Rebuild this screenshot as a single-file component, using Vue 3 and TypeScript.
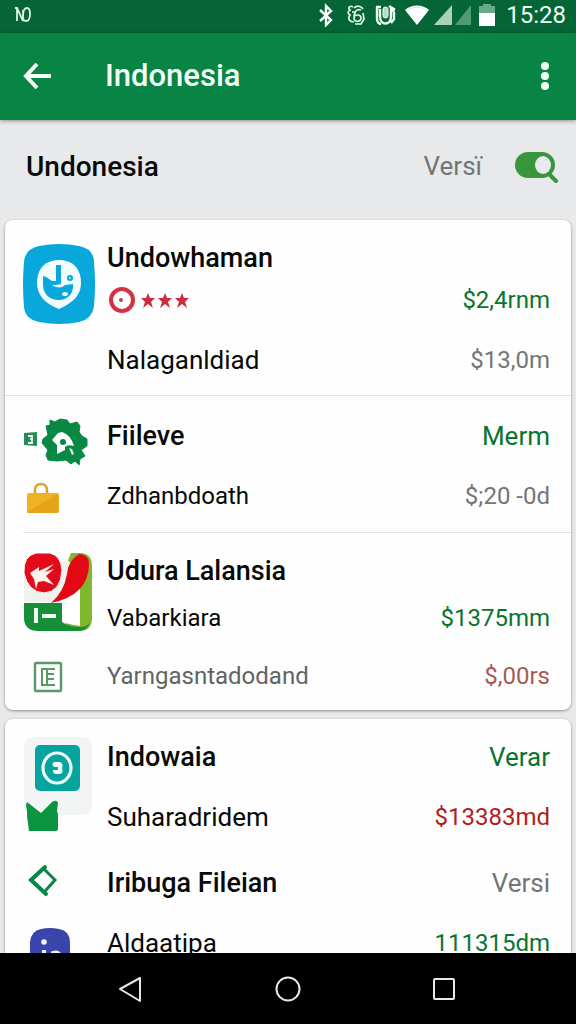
<script setup lang="ts">
import { ref } from 'vue'

type Tone = 'green' | 'gray' | 'red' | 'brick'
type Space = 'none' | 'small' | 'snug' | 'mid' | 'large'
interface Row {
  label: string
  value?: string
  tone?: Tone
  kind: 'title' | 'text' | 'narrow' | 'muted' | 'rating'
  space: Space
}
interface Group {
  id: string
  rows: Row[]
}

const filterOn = ref(true)

const isAmount = (value: string): boolean => /\d/.test(value)

const cards: Group[][] = [
  [
    {
      id: 'face',
      rows: [
        { label: 'Undowhaman', kind: 'title', space: 'none' },
        { label: 'Rating', value: '$2,4rnm', tone: 'green', kind: 'rating', space: 'none' },
        { label: 'Nalaganldiad', value: '$13,0m', tone: 'gray', kind: 'text', space: 'mid' },
      ],
    },
    {
      id: 'gear',
      rows: [
        { label: 'Fiileve', value: 'Merm', tone: 'green', kind: 'title', space: 'none' },
        { label: 'Zdhanbdoath', value: '$;20 -0d', tone: 'gray', kind: 'narrow', space: 'mid' },
      ],
    },
    {
      id: 'bird',
      rows: [
        { label: 'Udura Lalansia', kind: 'title', space: 'none' },
        { label: 'Vabarkiara', value: '$1375mm', tone: 'green', kind: 'narrow', space: 'small' },
        { label: 'Yarngasntadodand', value: '$,00rs', tone: 'brick', kind: 'muted', space: 'snug' },
      ],
    },
  ],
  [
    {
      id: 'teal',
      rows: [
        { label: 'Indowaia', value: 'Verar', tone: 'green', kind: 'title', space: 'none' },
        { label: 'Suharadridem', value: '$13383md', tone: 'red', kind: 'text', space: 'mid' },
        { label: 'Iribuga Fileian', value: 'Versi', tone: 'gray', kind: 'title', space: 'large' },
        { label: 'Aldaatipa', value: '111315dm', tone: 'green', kind: 'text', space: 'mid' },
      ],
    },
  ],
]
</script>

<template>
  <div class="screen">
    <div class="status">
      <svg class="status-logo" width="18" height="18" viewBox="0 0 18 18" fill="none" stroke="#d9f3e4" stroke-width="1.8" aria-hidden="true">
        <path d="M1 2h2v13M3 2l6 13V4M9 11c0-6 1-9 4-9s3 3 3 6-1 7-4 7-3-2-3-4" />
      </svg>
      <div class="status-icons" aria-hidden="true">
        <svg width="16" height="24" viewBox="0 0 16 24" fill="none" stroke="#fff" stroke-width="2.4">
          <path d="M2 7l11 10-5 5V3l5 5L2 18" />
        </svg>
        <svg class="gap-a" width="20" height="22" viewBox="0 0 20 22" fill="none" stroke="#e2f7ea" stroke-width="1.7">
          <path d="M7 3C4 1 1 4 4 6c-3 2-2 4 0 5-3 4 0 7 4 7M8 4c3-3 7-2 9 1M15 6c-5-2-7 3-7 8M8 14c0-4 7-4 7 0s-7 5-7 0M6 8h4M17 9l1 6-3 5H9" />
        </svg>
        <svg class="gap-s" width="22" height="22" viewBox="0 0 22 22" fill="none" stroke="#effff5" stroke-width="2.4">
          <path d="M3 3v12c0 3 2 5 4 5M2 3h5M6 5v7c0 10 11 10 11 0V4M15 2l5 3-1 3M20 8v7l-3 4" />
          <rect x="9" y="3" width="5" height="11" rx="2.5" fill="#b5d9c5" stroke-width="1" />
        </svg>
        <svg class="gap-b" width="26" height="22" viewBox="0 0 26 22">
          <path d="M1 6C7 0 19 0 25 6L13 21z" fill="#fff" />
          <path d="M3 7c6-5 14-5 20 0" fill="none" stroke="#cfe8da" />
        </svg>
        <svg class="gap-c" width="38" height="22" viewBox="0 0 38 22">
          <path d="M0 21L18 1v20z" fill="#a9d2b8" />
          <path d="M21 21L37 1v20z" fill="#4f9b72" />
        </svg>
        <svg class="gap-d" width="18" height="24" viewBox="0 0 18 24">
          <path d="M1 3h4V1h8v2h4v8H1z" fill="#6aab87" />
          <path d="M1 10h16v13H1z" fill="#fff" />
        </svg>
      </div>
      <time class="clock">15:28</time>
    </div>

    <header class="appbar">
      <button type="button" class="icon-btn" aria-label="Back">
        <svg width="30" height="30" viewBox="0 0 30 30" fill="none" stroke="#f4fff8" stroke-width="4">
          <path d="M15 3L4 15l11 12M4 15h25" />
        </svg>
      </button>
      <h1>Indonesia</h1>
      <button type="button" class="icon-btn" aria-label="More options">
        <svg width="10" height="30" viewBox="0 0 10 30" fill="#f4fff8">
          <circle cx="5" cy="5" r="4" /><circle cx="5" cy="15" r="4" /><circle cx="5" cy="25" r="4" />
        </svg>
      </button>
    </header>

    <main>
      <section class="section-head">
        <h2>Undonesia</h2>
        <label class="filter">
          <span>Versï</span>
          <input v-model="filterOn" type="checkbox" />
          <svg width="46" height="34" viewBox="0 0 46 34" aria-hidden="true">
            <rect x="1" y="3" width="40" height="26" rx="13" fill="#3a963d" />
            <path d="M35 25l7 7" stroke="#3a963d" stroke-width="4" stroke-linecap="round" />
            <ellipse cx="29" cy="16" rx="8" ry="9" fill="#e9eaeb" />
          </svg>
        </label>
      </section>

      <section v-for="(card, c) in cards" :key="c" class="card">
        <div v-for="group in card" :key="group.id" class="group" :class="'group-' + group.id">
          <div class="icons" aria-hidden="true">
            <template v-if="group.id === 'face'">
              <svg width="72" height="82" viewBox="0 0 72 82">
                <path d="M16 3Q36-1 56 3Q71 6 71 19Q73 41 71 63Q69 76 56 79Q36 83 16 79Q2 76 1 64Q-1 41 1 19Q2 6 16 3z" fill="#08a8dc" />
                <path d="M36 17C50 17 58 26 58 40C58 53 49 60 36 66C23 61 14 53 14 40C14 26 22 17 36 17z" fill="#f3fcff" />
                <path d="M33 22h5v19l-5 1z" fill="#08a8dc" />
                <path d="M20 33l3 1 6 4h4v4H20z" fill="#08a8dc" />
                <path d="M20 42h9q8 5 13 0l8-1c1 9-5 16-14 16-9 0-16-6-16-15z" fill="#08a8dc" />
                <circle cx="47" cy="35" r="3" fill="#08a8dc" />
                <circle cx="47" cy="35" r="1" fill="#b9e8f5" />
                <ellipse cx="42" cy="51" rx="3" ry="2" fill="#e6faff" />
              </svg>
            </template>
            <template v-else-if="group.id === 'gear'">
              <svg width="66" height="48" viewBox="0 0 66 48">
                <path d="M1 15l13-1v14l-13-1z" fill="#258a57" />
                <path d="M5 18h4v3H7h2v4H5" fill="none" stroke="#e7f7ee" stroke-width="1.8" />
                <path d="M27 2L32 4L37 1L44 2L47 6L54 4L57 8L56 14L59 18L64 21V28L58 32L62 38L57 41L56 47L52 43L48 46L43 42Q34 44 25 42L23 37L25 32L19 25L20 21L25 17L23 8L27 7z" fill="#078943" stroke="#078943" stroke-linejoin="round" />
                <path d="M35 15L39 14Q48 17 51 28Q45 26 42 29L42 32L34 36L34 27L29 22z" fill="#fff" />
                <ellipse cx="40" cy="24" rx="3" ry="3" fill="#078943" />
                <path d="M46 30l3 1 2 5-2 1z" fill="#d6eadc" />
              </svg>
              <svg class="bag" width="34" height="32" viewBox="0 0 34 32">
                <path d="M9 14V8c0-8 12-8 12 0v5" fill="none" stroke="#dca32c" stroke-width="2.5" />
                <rect x="1" y="11" width="32" height="20" rx="2" fill="#eeb225" />
                <path d="M1 30L32 12v17q0 2-2 2H3q-2 0-2-1z" fill="#e5a31c" />
              </svg>
            </template>
            <template v-else-if="group.id === 'bird'">
              <svg width="69" height="78" viewBox="0 0 69 78">
                <path d="M48 0h10q11 1 11 13v52q0 13-13 13H42V15z" fill="#80b82d" />
                <path d="M1 8h45l11 15v50L36 69V49H1z" fill="#f1f1ee" />
                <path d="M39 45l18-12v39q-13 0-18-5z" fill="#fff" />
                <path d="M56 1q10 0 10 10Q66 42 28 50Q41 39 44 21Q45 8 56 1z" fill="#e30914" />
                <path d="M13 0h14q11 3 12 17Q38 39 21 40Q5 39 1 20Q0 3 13 0z" fill="#e20a1b" stroke="#fff" />
                <path d="M7 20l9-6v4l15-7-9 8 9-3-8 7 8 9-10-4-6 1-2 7-2-10z" fill="#fff4ee" />
                <path d="M1 50h38v19q6 5 18 5 8 0 10-5-2 9-13 9H15Q2 78 1 66z" fill="#159039" />
                <path d="M13 55v15M19 63h14" stroke="#f2fff3" stroke-width="4" />
              </svg>
              <svg class="sheet" width="30" height="32" viewBox="0 0 30 32" fill="none" stroke="#579a6a">
                <rect x="2" y="2" width="26" height="28" rx="1" stroke-width="2.4" />
                <path d="M22 8H9v16h13M14 9v15M14 13h7M14 18h7" stroke-width="2" />
              </svg>
            </template>
            <template v-else>
              <svg width="70" height="96" viewBox="0 0 70 96">
                <rect x="1" y="1" width="68" height="78" rx="9" fill="#f3f4f4" />
                <rect x="12" y="9" width="45" height="46" rx="5" fill="#05a49e" />
                <ellipse cx="34" cy="32" rx="14" ry="15" fill="none" stroke="#edfffc" stroke-width="3.2" />
                <path d="M31 26h6q4 2 2 6 2 5-2 6h-4q-4-1-3-4h5v-3h-4q-3-3 0-5z" fill="#f1fffc" />
                <path d="M6 95L4 80V75l-1-6 1-3 14 11L29 66q5-3 6 1l-1 8 1 3v15q0 2-2 2z" fill="#0d9440" />
              </svg>
              <svg class="diamond" width="30" height="34" viewBox="0 0 30 34" fill="none" stroke="#078649" stroke-linecap="round">
                <path d="M17 3L3 16l15 14" stroke-width="4" />
                <path d="M17 6l10 10L18 26" stroke-width="3" />
              </svg>
              <svg class="indigo" width="42" height="44" viewBox="0 0 42 44">
                <path d="M12 1Q21-1 30 1Q41 3 41 14v18q0 11-11 11H12Q1 43 1 32V14Q2 3 12 1z" fill="#3846ab" />
                <circle cx="15" cy="14" r="2.8" fill="#f0f3ff" />
                <path d="M15 22v12M24 34V25q8-3 8 9" fill="none" stroke="#f0f3ff" stroke-width="4" />
              </svg>
            </template>
          </div>
          <ul class="rows">
            <li v-for="row in group.rows" :key="row.label" :class="['row', row.kind, 'space-' + row.space]">
              <svg v-if="row.kind === 'rating'" width="84" height="30" viewBox="0 0 84 30" role="img" :aria-label="row.label">
                <circle cx="15" cy="15" r="11" fill="#fff" stroke="#d63143" stroke-width="4" />
                <circle cx="14" cy="15" r="2" fill="#b84556" />
                <path
                  v-for="x in [41, 58, 75]"
                  :key="x"
                  :transform="`translate(${x} 15)`"
                  d="M0-7l2 5h5l-4 4 2 6-5-4-5 4 2-6-4-4h5z"
                  fill="#cc2c3d"
                />
              </svg>
              <span v-else class="label">{{ row.label }}</span>
              <span v-if="row.value" class="value" :class="[row.tone, { amount: isAmount(row.value) }]">{{ row.value }}</span>
            </li>
          </ul>
        </div>
      </section>
    </main>

    <nav class="navbar">
      <button type="button" aria-label="Back">
        <svg width="26" height="28" viewBox="0 0 26 28" fill="none" stroke="#e8e8e8" stroke-width="2" stroke-linejoin="round"><path d="M21 3v23L1 14z" /></svg>
      </button>
      <button type="button" aria-label="Home">
        <svg width="26" height="28" viewBox="0 0 26 28" fill="none" stroke="#e8e8e8" stroke-width="2"><circle cx="13" cy="14" r="11.5" /></svg>
      </button>
      <button type="button" aria-label="Recent apps">
        <svg width="26" height="28" viewBox="0 0 26 28" fill="none" stroke="#e8e8e8" stroke-width="2"><rect x="3" y="4" width="20" height="20" rx="1" /></svg>
      </button>
    </nav>
  </div>
</template>

<style>
body {
  margin: 0;
  background: #e8e9ea;
}
</style>

<style scoped>
.screen {
  display: flex;
  flex-direction: column;
  height: 100vh;
  font-family: Roboto, "Liberation Sans", sans-serif;
  font-size: 26px;
  color: #080a09;
  background: #e8e9ea;
}
button {
  padding: 0;
  border: 0;
  background: none;
  display: flex;
  align-items: center;
  justify-content: center;
}
svg {
  display: block;
  flex: none;
}
h1,
h2 {
  margin: 0;
  font-weight: 500;
}
.status {
  flex: none;
  display: flex;
  align-items: center;
  height: 33px;
  box-sizing: border-box;
  padding: 0 10px 3px 14px;
  background: #056536;
}
.status-icons {
  display: flex;
  align-items: center;
  margin-left: auto;
}
.gap-a {
  margin-left: 12px;
}
.gap-b,
.gap-s {
  margin-left: 8px;
}
.gap-c {
  margin-left: 4px;
}
.gap-d {
  margin-left: 6px;
}
.clock {
  margin-left: 10px;
  font-size: 24px;
  color: #effff5;
}
.appbar {
  flex: none;
  position: relative;
  display: flex;
  align-items: center;
  height: 87px;
  box-sizing: border-box;
  padding: 0 20px 2px 22px;
  background: #088445;
  box-shadow: 0 1px 4px rgba(0, 0, 0, 0.4);
}
.appbar h1 {
  flex: 1;
  margin-left: 53px;
  font-size: 31px;
  line-height: 40px;
  color: #f4fff8;
}
.appbar .icon-btn:last-child {
  width: 22px;
}
main {
  flex: 1;
  min-height: 0;
  overflow: hidden;
}
.section-head {
  display: flex;
  align-items: center;
  justify-content: space-between;
  height: 100px;
  box-sizing: border-box;
  padding: 0 16px 8px 26px;
}
.section-head h2 {
  font-size: 28px;
}
.filter {
  display: flex;
  align-items: center;
  position: relative;
  color: #737577;
}
.filter span {
  margin-right: 32px;
}
.filter input {
  position: absolute;
  right: 0;
  width: 46px;
  height: 34px;
  margin: 0;
  opacity: 0;
}
.card {
  margin: 0 5px 9px;
  border-radius: 8px;
  background: #fefefe;
  box-shadow: 0 1px 3px rgba(0, 0, 0, 0.4);
}
.group {
  display: flex;
}
.icons {
  flex: none;
  width: 84px;
  padding-left: 18px;
}
.rows {
  flex: 1;
  list-style: none;
  margin: 0;
  padding: 17px 21px 14px 0;
}
.group-face {
  border-bottom: 1px solid #e2e3e4;
}
.group-gear .rows {
  padding-top: 19px;
  padding-bottom: 15px;
}
.group-bird .rows {
  padding-top: 18px;
  padding-bottom: 13px;
}
.group-bird {
  position: relative;
}
.group-bird::before {
  content: "";
  position: absolute;
  inset: 0 0 auto 18px;
  height: 1px;
  background: #e2e3e4;
}
.group-face .icons {
  padding-top: 23px;
}
.group-gear .icons {
  padding-top: 22px;
}
.group-bird .icons {
  padding-top: 21px;
}
.group-teal .icons {
  padding-top: 17px;
}
.bag {
  margin: 16px 0 0 3px;
}
.sheet {
  margin: 30px 0 0 10px;
}
.diamond {
  margin: 32px 0 0 5px;
}
.indigo {
  margin: 30px 0 0 6px;
}
.row {
  display: flex;
  align-items: center;
  justify-content: space-between;
  height: 42px;
  line-height: 42px;
  white-space: nowrap;
}
.space-small {
  margin-top: 5px;
}
.space-snug {
  margin-top: 16px;
}
.space-mid {
  margin-top: 18px;
}
.space-large {
  margin-top: 24px;
}
.title .label {
  font-size: 27px;
  font-weight: 500;
}
.narrow .label {
  font-size: 24px;
}
.muted .label {
  font-size: 24px;
  color: #606463;
}
.value {
  margin-left: auto;
}
.amount {
  font-size: 24px;
}
.green {
  color: #08752c;
}
.gray {
  color: #737577;
}
.red {
  color: #b21c1c;
}
.brick {
  color: #a95a50;
}
.navbar {
  flex: none;
  display: flex;
  align-items: center;
  justify-content: center;
  gap: 130px;
  height: 71px;
  background: #000;
}
</style>
